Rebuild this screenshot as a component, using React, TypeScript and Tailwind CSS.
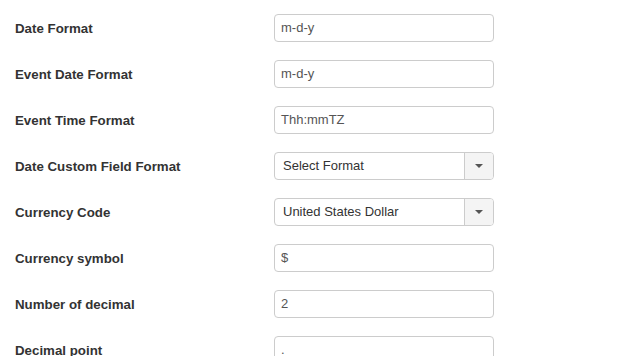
const rows: { label: string; value: string; select?: boolean }[] = [
  { label: "Date Format", value: "m-d-y" },
  { label: "Event Date Format", value: "m-d-y" },
  { label: "Event Time Format", value: "Thh:mmTZ" },
  { label: "Date Custom Field Format", value: "Select Format", select: true },
  { label: "Currency Code", value: "United States Dollar", select: true },
  { label: "Currency symbol", value: "$" },
  { label: "Number of decimal", value: "2" },
  { label: "Decimal point", value: "." },
];

export default function App() {
  return (
    <div
      className="h-[356px] w-[619px] overflow-hidden bg-white pl-[15px] pt-[14px]"
      style={{ fontFamily: '"Liberation Sans", Arial, sans-serif' }}
    >
      <div className="flex flex-col gap-[18px]">
        {rows.map((r) => (
          <div key={r.label} className="flex items-center">
            <div className="w-[259px] pt-[1px] text-[13.3px] font-bold text-[#333]">{r.label}</div>
            {r.select ? (
              <div className="flex h-[28px] w-[220px] overflow-hidden rounded-[4px] border border-[#ccc] bg-white">
                <div className="flex flex-1 items-center pl-[8px] text-[13px] text-[#333]">{r.value}</div>
                <div className="flex w-[29px] items-center justify-center border-l border-[#ccc] bg-[#f4f4f4]">
                  <div className="h-0 w-0 border-x-[4px] border-t-[4px] border-x-transparent border-t-[#555]" />
                </div>
              </div>
            ) : (
              <div className="flex h-[28px] w-[220px] items-center rounded-[4px] border border-[#ccc] bg-white pl-[6px] text-[13px] text-[#555]">
                {r.value}
              </div>
            )}
          </div>
        ))}
      </div>
    </div>
  );
}
